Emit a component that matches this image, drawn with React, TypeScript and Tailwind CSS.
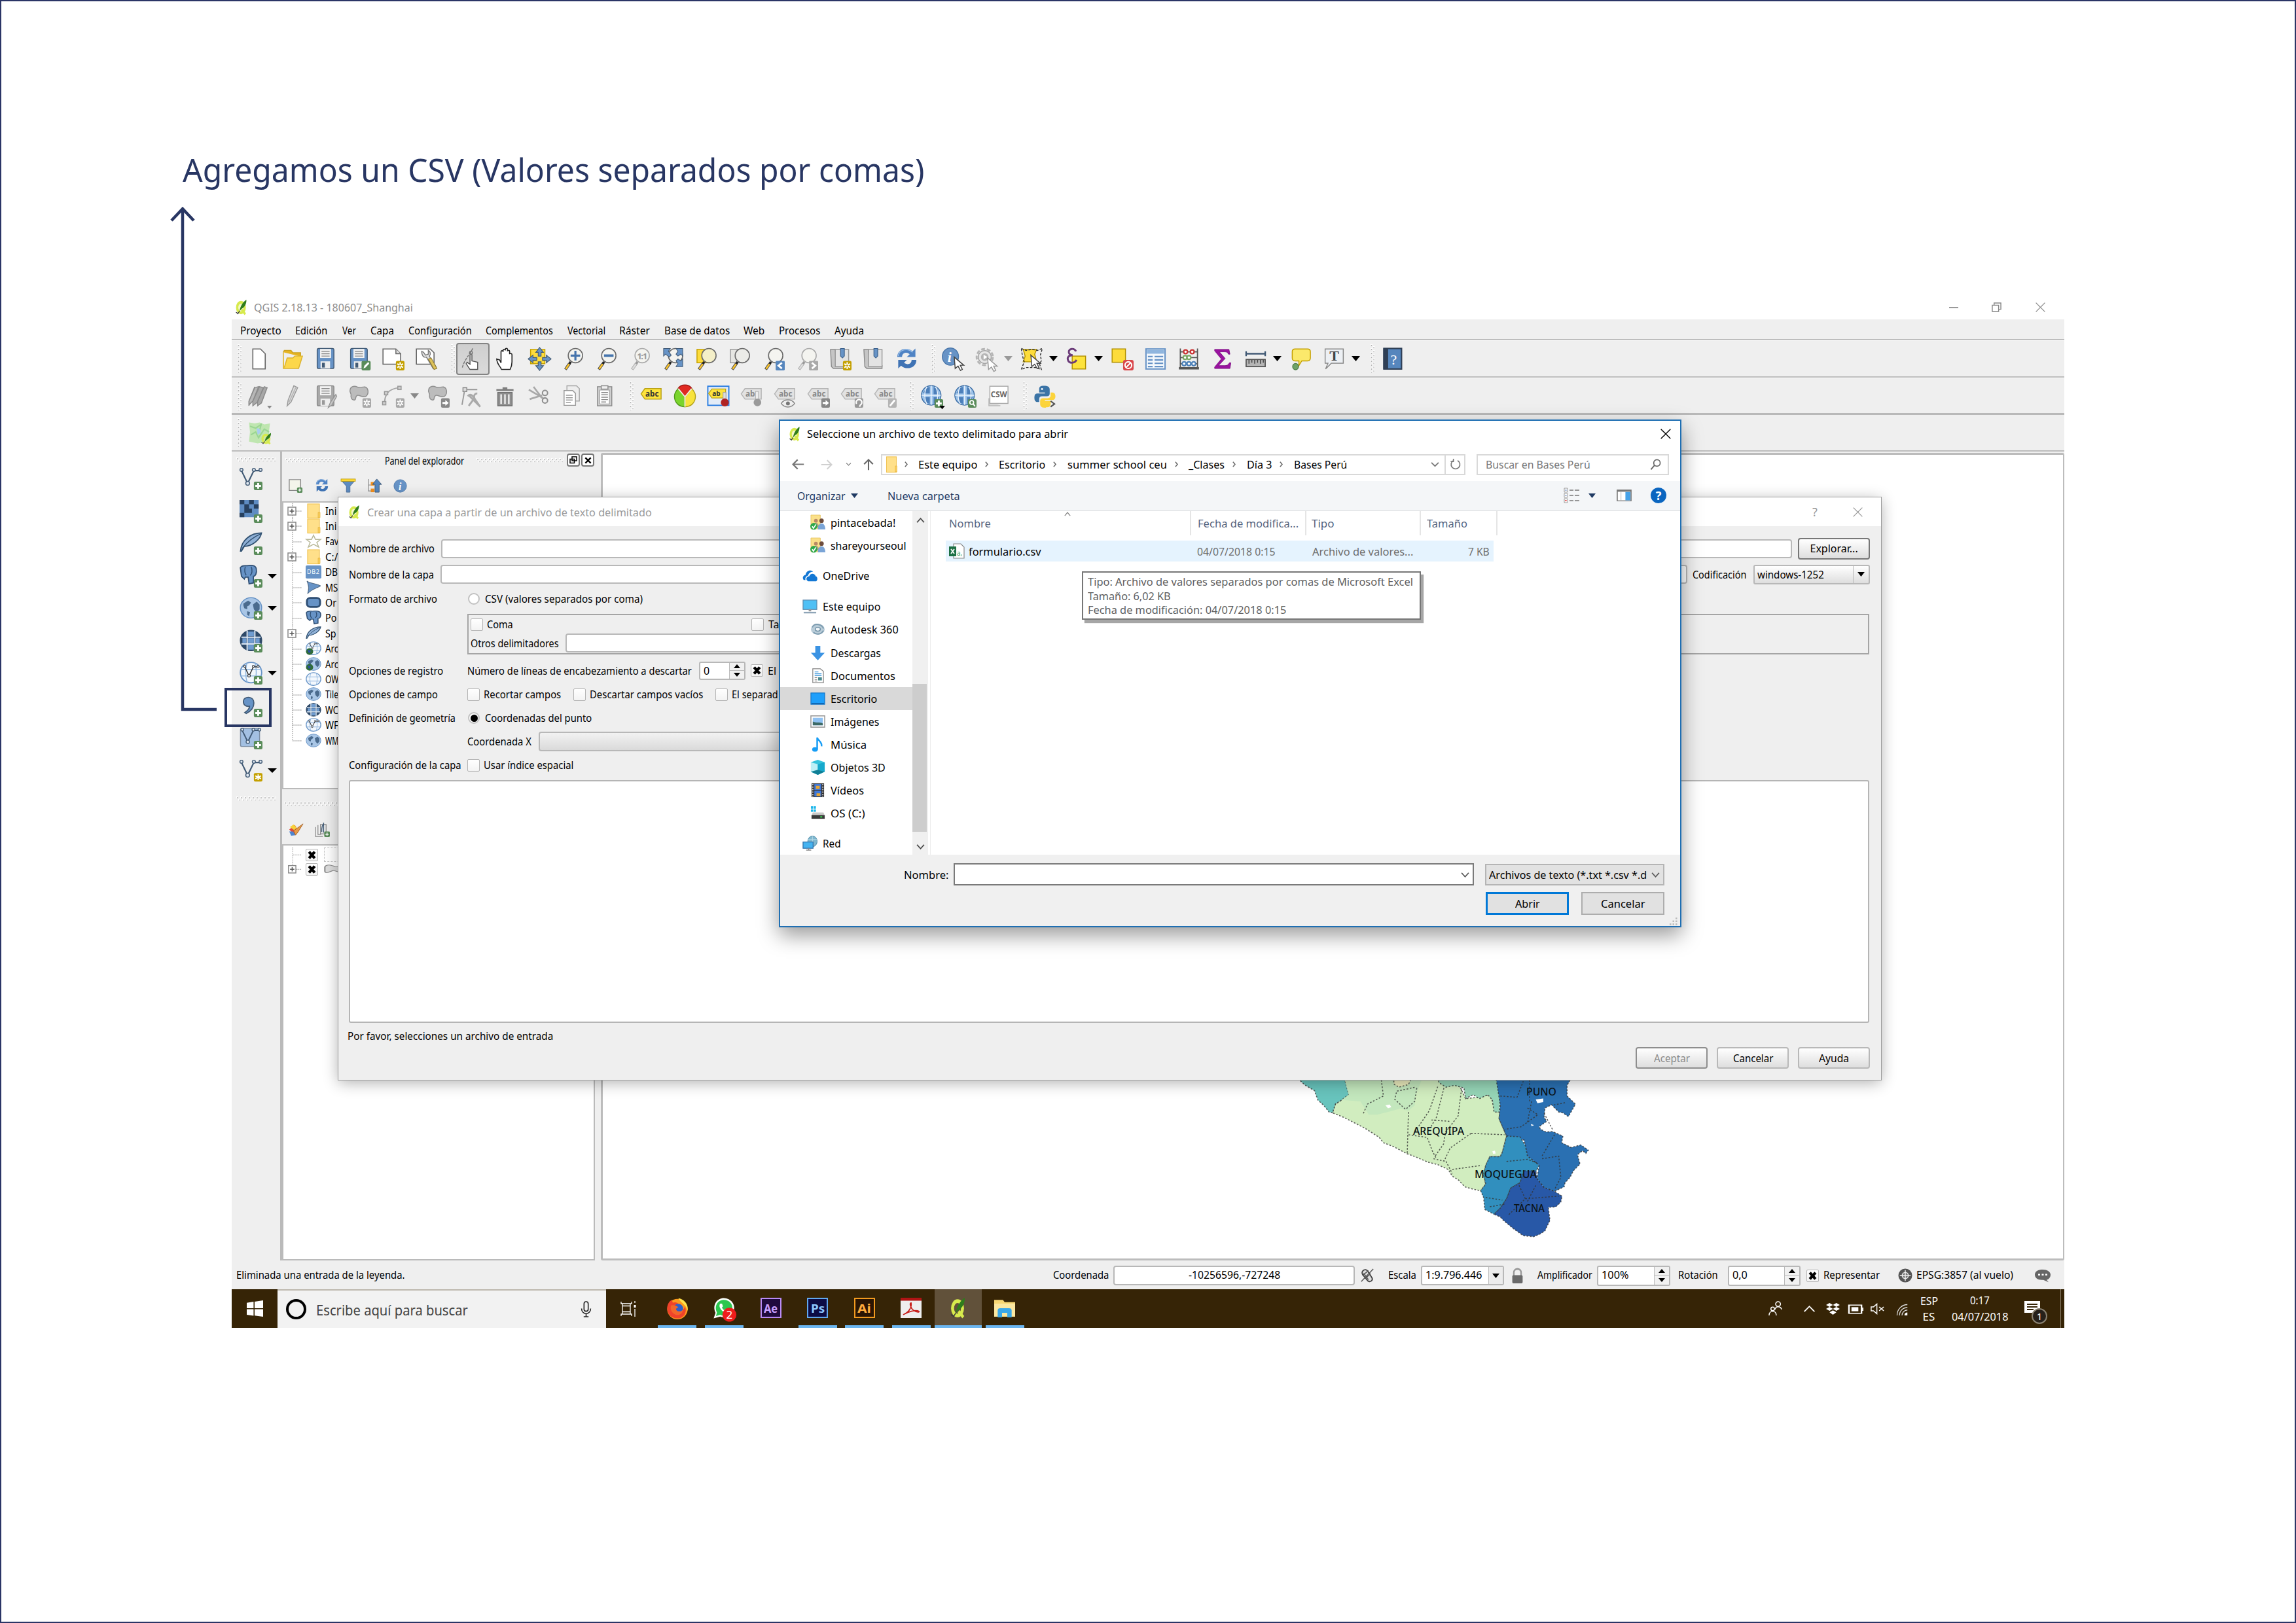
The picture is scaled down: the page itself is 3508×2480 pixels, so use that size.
import React, { useLayoutEffect, useRef, useState, ReactNode } from "react";

/* Text squeezed or stretched horizontally so that it fills the width of its box. */
function T({ className = "", children }: { className?: string; children: ReactNode }) {
  const outer = useRef<HTMLSpanElement>(null);
  const inner = useRef<HTMLSpanElement>(null);
  const [k, setK] = useState(1);
  useLayoutEffect(() => {
    if (outer.current && inner.current) {
      const natural = inner.current.offsetWidth;
      if (natural) setK(outer.current.clientWidth / natural);
    }
  }, []);
  return (
    <span ref={outer} className={"block shrink-0 whitespace-nowrap leading-none " + className}>
      <span ref={inner} className="inline-block origin-left" style={{ transform: `scaleX(${k})` }}>
        {children}
      </span>
    </span>
  );
}

function I({ children, className = "size-[35px]", vb = "0 0 24 24" }: { children: ReactNode; className?: string; vb?: string }) {
  return (
    <svg viewBox={vb} className={"block shrink-0 overflow-visible " + className} fill="none" preserveAspectRatio="none">
      {children}
    </svg>
  );
}

const B = "#6793c6";
const D = "#415a75";
const G = "#8c8c8c";

/* ---------- badges ---------- */
const Plus = () => (
  <g>
    <rect x="15" y="15" width="9" height="9" rx="1.500" fill="#5a8c5a" />
    <path d="M19.500 16.500v6M16.500 19.500h6" stroke="#fff" strokeWidth="2" />
  </g>
);
const Star = ({ c = "#c4a000" }: { c?: string }) => (
  <g>
    <rect x="15" y="14" width="9" height="10" rx="1.500" fill={c} />
    <path d="M19.500 15.500v7M16.500 17l6 4M22.500 17l-6 4" stroke="#fff" strokeWidth="1.500" />
    <circle cx="19.500" cy="19" r="1" fill={c} />
  </g>
);
const ArrowBadge = ({ c = "#888" }: { c?: string }) => (
  <g>
    <rect x="15" y="14" width="9" height="10" rx="1.500" fill={c} />
    <path d="M16.500 18h3v-2l3.500 3-3.500 3v-2h-3z" fill="#fff" />
  </g>
);
const ChevBadge = ({ c, d }: { c: string; d: string }) => (
  <g>
    <rect x="14.500" y="14" width="9.500" height="10" rx="1" fill={c} />
    <path d={d} stroke="#fff" strokeWidth="2" />
  </g>
);

/* ---------- toolbar icons ---------- */
const Lens = ({ gray = false, fill = "#f4f4f0", children }: { gray?: boolean; fill?: string; children?: ReactNode }) => (
  <g>
    <circle cx="14.500" cy="8.500" r="7.500" fill={fill} stroke={gray ? "#aaa" : "#6a6a6a"} strokeWidth="1.100" />
    <path d="M9.500 15L8 17.500" stroke={gray ? "#999" : "#222"} strokeWidth="2.600" />
    <path d="M8.200 17L4 23" stroke={gray ? "#aaa" : "#444"} strokeWidth="3" />
    <path d="M8 17.300L4.400 22.500" stroke={gray ? "#ddd" : "#fbc52e"} strokeWidth="1.800" />
    {children}
  </g>
);
const Page = ({ d = "M5 1.500h8l5 5v16H5z" }: { d?: string }) => <path d={d} fill="#fff" stroke="#666" strokeWidth="1.100" />;
const Floppy = ({ gray = false }: { gray?: boolean }) => (
  <g>
    <rect x="2.500" y="1" width="17.500" height="21" rx="1.500" fill={gray ? "#a9a9a9" : B} stroke={gray ? G : D} />
    <rect x="5.500" y="1.500" width="11.500" height="9.500" fill="#f2f2f2" />
    <path d="M7 4h8.500M7 6.500h8.500M7 9h8.500" stroke={G} strokeWidth="1" />
    <rect x="6" y="14.500" width="10" height="7.500" fill="#eee" />
    <rect x="7.500" y="16" width="3" height="5" fill={gray ? "#999" : D} />
  </g>
);
const Cursor = ({ x = 12, y = 10, c = "#444" }: { x?: number; y?: number; c?: string }) => (
  <path transform={`translate(${x} ${y})`} d="M0 0l1 12 3-2.500 2.500 4.500 2-1-2.200-4.400H10z" fill="#fff" stroke={c} strokeWidth="1" />
);
const Blob = () => (
  <path d="M2 5c1-4 5-4 8-2.500S18 0 20 4s0 9-4 8.500-6-3-7.500-.5 0 4-2.500 4-3.500-3-3-5-2-3-1-6z" fill="#bcbcbc" stroke="#8f8f8f" />
);
const Tag = ({ gray = false, t = "abc" }: { gray?: boolean; t?: string }) => (
  <g>
    <path d="M1 9.500L5 4h17v11H5z" fill={gray ? "#e2e2e2" : "#fde33c"} stroke={gray ? "#b4b4b4" : "#b8a014"} />
    <text x="5.500" y="12.500" fontSize="8.500" fontWeight="bold" fontFamily="Noto Sans, sans-serif" fill={gray ? "#888" : "#333"} textLength={t === "abc" ? 14 : 10} lengthAdjust="spacingAndGlyphs">
      {t}
    </text>
  </g>
);
const Globe = () => (
  <g>
    <circle cx="11.500" cy="11" r="10.200" fill="#9cc3ea" stroke="#3d6ea5" />
    <path d="M7 3l3-1v7H4l-1-1zM14 2l4 3 1 5h-5zM4 13h6v7l-3-1zM14 13h6l-2 5-4 2z" fill="#4c7fba" />
    <path d="M1.500 11h20M11.500 1v20M7 2c-3 5-3 13 0 18M16 2c3 5 3 13 0 18" stroke="#e9f2fb" strokeWidth="1" />
  </g>
);
const Refresh = () => (
  <g>
    <path d="M2 10c0-9 11-11 16-6l3-3v9h-9l3-3c-4-3-8-1-8 3z" fill="#4f83c4" />
    <path d="M22 13c0 9-11 11-16 6l-3 3v-9h9l-3 3c4 3 8 1 8-3z" fill="#3f73b4" />
    <path d="M3 9c1-7 10-9 15-4" stroke="#9cc0e8" strokeWidth="1" />
  </g>
);
const Roll = () => (
  <g>
    <path d="M2 2h5l1 17h13v3H5l-2-2z" fill="#c5c5c5" stroke="#8c8c8c" />
    <path d="M7 2h14v18H7z" fill="#e3e3e3" stroke="#9a9a9a" />
    <path d="M12.500 1h4v8l-2 2-2-2z" fill={B} stroke="#3a5f8a" strokeWidth=".8" />
  </g>
);

/* QGIS mark: lime ring with a tail and a green leaf laid over it. */
const Logo = ({ hole = "#f4f7c8" }: { hole?: string }) => (
  <g>
    <ellipse cx="11.500" cy="12.500" rx="7.300" ry="8.500" fill={hole} stroke="#d7ea4d" strokeWidth="4.400" />
    <path d="M13 16l7 7" stroke="#d7ea4d" strokeWidth="4" />
    <path d="M9 18C10 11 15 4 22 0c.5 6-3 12-8.500 14z" fill="#2f7d1c" />
    <path d="M9 18L5 23M2 20l4 2" stroke="#3a3a3a" strokeWidth="1.400" />
  </g>
);

const tb1a: ReactNode[] = [
  <Page />,
  <g><path d="M2 5l1-2h7l2 2.500h8v4" fill="#e6b422" stroke="#caa11f" /><path d="M2 5v17h16l4-13-8 0-2 2H6L3 21" fill="#fcd74a" stroke="#dbb22e" /></g>,
  <Floppy />,
  <g><Floppy /><rect x="14" y="14" width="9.500" height="10" rx="1.500" fill="#5a8c5a" /><path d="M16 22l1-3 4-4 1 2-4 4z" fill="#fff" /></g>,
  <g><Page d="M1.500 1.500H15l5 5v11H1.500z" /><path d="M15 1.500v5h5" fill="#ddd" stroke="#666" /><Star /></g>,
  <g><Page d="M1.500 1.500H16l4 4v12H1.500z" /><path d="M7 4c0 4 2 7 5 6l7 12 3-2-7-11c2-2 1-5-1-6l0 4-3 1-2-3z" fill="#e4e4e4" stroke="#777" /><path d="M14 12l6 11 3-1-6-11z" fill="#ddc25a" stroke="#8f7a2f" strokeWidth=".7" /></g>,
];
const touch = (
  <g>
    <path d="M9 23l-4-6 1-1.500 3 2V8c0-1.500 2-1.500 2 0v6l6 1.500V23z" fill="#fff" stroke="#555" />
    <path d="M1 21C3 13 8 8 12 1" stroke="#777" strokeDasharray="3 1" />
    <circle cx="10" cy="5.500" r="1.500" stroke="#777" />
  </g>
);
const tb1b: ReactNode[] = [
  <path d="M6 21C3 17 2 14 2 12l3 1 1.500 3V4.500c0-1.500 2-1.500 2.200 0V3c0-1.500 2.300-1.500 2.300 0V2c0-1.500 2.300-1.500 2.300 0v2c0-1.500 2.200-1.500 2.200 0v3c0-1.500 2.500-1 2.500.5V15c0 4-1 6-2 8H7z" fill="#fff" stroke="#222" strokeWidth="1.100" />,
  <g><rect x="2.500" y="2" width="15" height="15" fill="#fddc3b" stroke="#c4a000" /><path d="M12 0l4 5h-2.500v4h-3V5H8zM12 24l4-5h-2.500v-4h-3v4H8zM0 12l5-4v2.500h4v3H5V16zM24 12l-5-4v2.500h-4v3h4V16z" fill={B} stroke={D} strokeWidth=".8" /></g>,
  <Lens><path d="M14.500 3.500v10M9.500 8.500h10" stroke="#4675ad" strokeWidth="2.200" /></Lens>,
  <Lens><path d="M9.500 8.500h10" stroke="#4675ad" strokeWidth="2.600" /></Lens>,
  <Lens gray><text x="9" y="12" fontSize="9" fontWeight="bold" fill="#999" fontFamily="Noto Sans, sans-serif" textLength="11">1:1</text></Lens>,
  <g><Lens fill="#f4f4f0" /><path d="M2 1h7L7 4l3 4-2 2-4-3-2 2zM22 1h-7l2 3-2 3 2 2 3-2 2 2zM22 20h-7l2-3-2-3 2-2 3 2 2-2z" fill={B} stroke={D} strokeWidth=".7" /></g>,
  <g><rect x="2" y="2" width="12" height="14" fill="#fddc3b" stroke="#c4a000" /><Lens fill="#f4efc8" /></g>,
  <g><rect x="2" y="2" width="12" height="14" fill="#e6e6e2" stroke="#999" /><Lens fill="#ecece8" /></g>,
  <g><Lens /><ChevBadge c="#5686bd" d="M21 16l-3.500 3 3.500 3" /></g>,
  <g><Lens gray /><ChevBadge c="#a9a9a9" d="M17.500 16l3.500 3-3.500 3" /></g>,
  <g><Roll /><Star /></g>,
  <Roll />,
  <Refresh />,
];
const identify = <g><ellipse cx="9" cy="9.500" rx="8.500" ry="9" fill={B} stroke="#4c78ab" /><text x="6" y="15" fontSize="15" fontStyle="italic" fontWeight="bold" fontFamily="Liberation Serif, serif" fill="#fff">i</text><Cursor x={13} y={10} /></g>;
const actions = <g><circle cx="10" cy="10" r="8.500" stroke="#b5b5b5" strokeWidth="2" strokeDasharray="4 2" /><circle cx="10" cy="10" r="6.800" fill="#e6e6e6" stroke="#a5a5a5" /><circle cx="10" cy="10" r="4" fill="#b5b5b5" /><path d="M8.800 7.500l4 2.500-4 2.500z" fill="#fff" /><Cursor x={13} y={11} c="#999" /></g>;
const select = <g><path d="M3 2h14l-2 5 2 8H3l2-6z" fill="#fddc3b" stroke="#b39200" /><path d="M1 1l5 2 6-1 6 1 5-2-2 7 1 6-2 3 2 6-6-2H6l-5 2 3-8-2-7z" stroke="#333" strokeDasharray="2.500 1.500" /><Cursor x={11} y={8} /></g>;
const expr = <g><rect x="7" y="9" width="14" height="13.500" fill="#fde33c" stroke="#b39200" /><path d="M11 4C9 0 3 1 3.500 5c.3 2 2 3 4 3-4 0-6 2-5 5 1 4 7 4 9 0" stroke="#6a3a78" strokeWidth="2" /></g>;
const desel = <g><rect x="1.500" y="1.500" width="14" height="14" fill="#fddc3b" stroke="#b39200" /><rect x="13" y="13" width="11" height="11" rx="2" fill="#d9464b" /><circle cx="18.500" cy="18.500" r="3.500" stroke="#fff" strokeWidth="1.400" /><path d="M16 21l5-5" stroke="#fff" strokeWidth="1.400" /></g>;
const table = <g><rect x="2" y="1.500" width="20" height="21" fill="#f4f8fc" stroke={B} strokeWidth="1.400" /><rect x="3" y="2.500" width="18" height="4" fill="#8fb5de" /><path d="M4 9.500h5M11 9.500h9M4 13h5M11 13h9M4 16.500h5M11 16.500h9M4 20h5M11 20h9" stroke={B} strokeWidth="1.600" /></g>;
const abacus = <g><path d="M3 1v20M21 1v20M3 4.500h18M3 10.500h18M3 17h18" stroke="#555" strokeWidth="1.200" /><rect x="1.500" y="20.500" width="21" height="2.500" fill="#555" /><g fill="#fff" strokeWidth="1.500"><g stroke="#c93434"><circle cx="8.500" cy="4.500" r="2" /><circle cx="15.500" cy="4.500" r="2" /></g><g stroke="#79a965"><circle cx="8" cy="10.500" r="2" /><circle cx="12" cy="10.500" r="2" /></g><g stroke="#4c80b8"><circle cx="7" cy="17" r="2" /><circle cx="12" cy="17" r="2" /><circle cx="17" cy="17" r="2" /></g></g></g>;
const sigma = <path d="M4 2h15l1 5h-1.500c-1-2-2-2.500-4-2.500H9l6 7L8 19h7c2 0 3.500-1 4.500-3H21l-1 6H4v-1.500L11 12 4 3.500z" fill="#9a12a0" stroke="#7a0e80" strokeWidth=".6" />;
const measure = <g><path d="M2 6.500h20M2 4v5M22 4v5" stroke={D} strokeWidth="1.600" /><rect x="2" y="12.500" width="20" height="7.500" fill="#b5b5b5" stroke="#555" strokeWidth="1.200" /><path d="M5 13v4M8 13v3M11 13v4M14 13v3M17 13v4M20 13v3" stroke="#444" /></g>;
const tip = <g><path d="M6 1.500h13c2 0 3 1 3 3V11c0 2-1 3-3 3h-6l-3 5V14H6c-2 0-3-1-3-3V4.500c0-2 1-3 3-3z" fill="#fbe96b" stroke="#c4a000" /><ellipse cx="6.500" cy="20" rx="3" ry="3.300" fill="#6ea266" stroke="#4d7d47" /></g>;
const textAnn = <g><path d="M2.500 1.500h19v15H9l-6 6 2.500-6h-3z" fill="#edf0f4" stroke="#888" /><text x="7" y="14" fontSize="15" fontWeight="bold" fontFamily="Liberation Serif, serif" fill="#444">T</text></g>;
const help = <g><rect x="3" y="1" width="18.500" height="21.500" fill="#5686bd" stroke="#2f3f55" strokeWidth="1.500" /><rect x="2.500" y="1" width="5" height="21.500" fill="#2f3f55" /><text x="10" y="17.500" fontSize="15" fontFamily="Liberation Serif, serif" fill="#fff">?</text></g>;

const tb2a: ReactNode[] = [
  <g><path d="M7 2L1 17v5M12 2L5 17v5l5-4 6-15zM17 2l-7 15v5l4-3 6-16z" fill="#a8a8a8" stroke="#8a8a8a" /><path d="M7 3l4-1-6 15-4 4 0-4z" fill="#b8b8b8" stroke="#8a8a8a" /><path d="M20 22h5l-2.500 3z" fill="#888" /></g>,
  <g><path d="M13 1l4 2-7 15-4 4 1-6z" fill="#dcdcdc" stroke="#9a9a9a" /><path d="M15 3L8 18" stroke="#b4b4b4" /></g>,
  <g><Floppy gray /><path d="M22 10l-6 9-2 5 4-3 5-9z" fill="#c4c4c4" stroke="#909090" strokeWidth=".8" /></g>,
  <g><Blob /><Star c="#a8a8a8" /></g>,
  <g><path d="M3 21C3 11 6 4 19 3" stroke="#a5a5a5" strokeWidth="1.300" /><g fill="#ccc" stroke="#999"><rect x="1" y="17.500" width="3.500" height="3.500" /><rect x="3" y="7" width="3.500" height="3.500" /><rect x="17" y="1.500" width="3.500" height="3.500" /></g><Star c="#a8a8a8" /></g>,
];
const tb2b: ReactNode[] = [
  <g><Blob /><ArrowBadge c="#888" /></g>,
  <g><rect x="3" y="3" width="4" height="4" fill="#ddd" stroke="#888" /><path d="M7 5h11M4.500 7L2 21" stroke="#999" strokeWidth="1.300" /><path d="M9 11l11 11M18 9c-3 0-4 3-3 5L9 22M8 12c2-3 5-1 6 1l7 10" stroke="#aaa" strokeWidth="2" /></g>,
  <g><path d="M3 5.500h18M9.500 3.500h5" stroke="#808080" strokeWidth="2" /><path d="M4.500 8h15v14h-15z" fill="#8f8f8f" stroke="#707070" /><path d="M8 10v10M12 10v10M16 10v10" stroke="#e6e6e6" strokeWidth="1.800" /></g>,
  <g><path d="M2 5l15 9M3 15l13-4M7 2l9 12" stroke="#a8a8a8" strokeWidth="1.800" /><circle cx="19" cy="8.500" r="2.700" stroke="#8f8f8f" strokeWidth="1.400" /><circle cx="19" cy="16.500" r="2.700" stroke="#8f8f8f" strokeWidth="1.400" /></g>,
  <g><path d="M7 1h10l3 3v13H7z" fill="#eee" stroke="#a8a8a8" /><path d="M4 6h9l3 3v12.500H4z" fill="#fff" stroke="#999" /><path d="M6 11h7M6 13.500h7M6 16h7M6 18.500h5" stroke="#999" /></g>,
  <g><rect x="4" y="2" width="15" height="20" fill="#d0d0d0" stroke="#8c8c8c" /><path d="M6.500 5.500h10V20h-10z" fill="#fff" stroke="#999" strokeWidth=".7" /><rect x="8" y="1" width="7" height="3.500" fill="#f0f0f0" stroke="#8c8c8c" /><path d="M8 8h7M8 10.500h7M8 13h7M8 15.500h7M8 18h5" stroke="#888" /></g>,
];
const tb2c: ReactNode[] = [
  <Tag />,
  <g strokeWidth="1"><path d="M12 12.500V23C6 23 1 19 1 12 1 8 3 6 5 4z" fill="#7ad42c" stroke="#4f9a1a" /><path d="M12 12.500V23c6 0 11-4 11-11 0-4-2-6-4-8z" fill="#f8e33c" stroke="#b3a21a" /><path d="M12 12.500L5 3.500c3-4.500 11-4.500 14 0z" fill="#e02a22" stroke="#a01a15" /><path d="M5 4l7 8.500V23M12 12.500L19 4" stroke="#f4f4e8" strokeWidth="1.200" /></g>,
  <g><rect x="1" y="1.500" width="22" height="20" fill="#e3ecf7" stroke="#2a7de1" strokeWidth="1.300" /><g transform="translate(1 1) scale(.85)"><Tag t="ab" /></g><rect x="17" y="8" width="3" height="8" fill="#ddd" stroke="#999" strokeWidth=".6" /><circle cx="18.800" cy="18.500" r="4.200" fill="#b02323" /></g>,
  <g><Tag gray t="ab" /><rect x="16" y="7" width="3" height="8" fill="#eee" stroke="#aaa" strokeWidth=".6" /><circle cx="18" cy="18.500" r="4" fill="#9a9a9a" /></g>,
  <g><Tag gray /><path d="M8 19.500c3-5 11-5 14 0-3 5-11 5-14 0z" fill="#eee" stroke="#888" /><circle cx="15" cy="19.500" r="2" fill="#777" /></g>,
  <g><Tag gray /><ArrowBadge /></g>,
  <g><Tag gray /><rect x="15" y="14" width="9" height="10" rx="1.500" fill="#999" /><path d="M17 20a3 3 0 1 1 4 1l-1 2" stroke="#fff" strokeWidth="1.500" /></g>,
  <g><Tag gray /><rect x="15" y="14" width="9" height="10" rx="1.500" fill="#b5b5b5" /><path d="M17 22l5-6" stroke="#fff" strokeWidth="2" /></g>,
];
const tb2d: ReactNode[] = [
  <g><Globe /><Plus /><path d="M20 22h6l-3 3.500z" fill="#000" /></g>,
  <g><Globe /><rect x="15" y="15" width="9" height="9" rx="1.500" fill="#5a8c5a" /><circle cx="19" cy="18.500" r="2" stroke="#fff" strokeWidth="1.200" /><path d="M20.500 20l2 2.500" stroke="#fff" strokeWidth="1.400" /></g>,
  <g><path d="M2 14v8h12" stroke="#bbb" fill="#ddd" /><rect x="3" y="1.500" width="19" height="18" fill="#fff" stroke="#aaa" /><text x="4" y="13" fontSize="8.500" fontWeight="bold" fontFamily="Noto Sans, sans-serif" fill="#666" textLength="17" lengthAdjust="spacingAndGlyphs">CSW</text></g>,
];
const python = (
  <g>
    <path d="M11 1c-4 0-5 1-5 4v3h6v1H4c-3 0-3 3-3 5s1 4 3 4h2v-3c0-2 1-3 3-3h5c2 0 3-1 3-3V5c0-3-2-4-6-4z" fill="#3b74a6" />
    <path d="M13 23.500c4 0 5-1 5-4v-2.500h-6v-1h8c2 0 3-2 3-4s-1-4-3-4h-2v3c0 2-1 3-3 3h-5c-2 0-3 1-3 3v3c0 3 2 4 6 4z" fill="#fcd43c" />
    <circle cx="9" cy="4.500" r="1" fill="#fff" />
    <path d="M18 17l4 3-4 3" stroke="#555" strokeWidth="1.500" />
  </g>
);

/* ---------- layer-source icons ---------- */
const Nodes = ({ c = D }: { c?: string }) => (
  <g>
    <path d="M2 3.500L8.500 17 15 3.500h7" stroke={c} strokeWidth="1.500" />
    <g fill="#dfe7f0" stroke={c}><circle cx="2" cy="2.700" r="1.600" /><circle cx="8.500" cy="16.800" r="2" /><circle cx="15" cy="2.700" r="1.600" /><circle cx="22" cy="2.700" r="1.600" /></g>
  </g>
);
const Elephant = () => (
  <g>
    <path d="M.8 3c2-3 5-2 7-2 4-1 9-.5 9.700 3 1 5-1 8-3 8v7l-4.500 1-1-7H6l-1 2-3-3z" fill={B} stroke="#2f4f74" strokeWidth="1.200" />
    <path d="M6 2c-1 4-.5 7 1 9M12 2c2 3 1 8-1 9" stroke="#2f4f74" strokeWidth="1" />
  </g>
);
const Feather = () => (
  <g>
    <path d="M1 20C2 8 12 1 23 1c-1 6-9 14-18 14l-3 5z" fill="#8fb0d6" stroke="#2f4f6f" strokeWidth="1.200" />
    <path d="M3 17C9 9 15 5 22 2" stroke="#2f4f6f" strokeWidth="1" />
  </g>
);
const Earth = () => (
  <g><ellipse cx="12" cy="11.500" rx="11.200" ry="10.700" fill="#a9c6e6" stroke={B} /><path d="M4 7l5-3 3 2-2 3-2 1v3l-3-1-1-3zM14 8l4-3 3 3v5l-3 4-3-4zM8 15l3 1-1 4-2-1z" fill="#4a6b8e" /></g>
);
const Earth2 = () => (
  <g><ellipse cx="12" cy="11.500" rx="11.200" ry="10.700" fill="#2f4a68" stroke="#2f4a68" /><path d="M2 8h20M2 15h20M8 1v21M16 1v21" stroke="#dce8f5" strokeWidth="1.400" /><path d="M9 9h6v5H9zM3 9h4v5H3zM17 9h4v5h-4zM9 2h6v5H9zM9 16h6v5H9z" fill="#6f9cd0" /></g>
);
const Earth3 = () => (
  <g><ellipse cx="12" cy="11.500" rx="11.200" ry="10.700" fill="#f3f8fd" stroke={B} strokeWidth="1.300" /><path d="M1 8h22M1 15h22M8 1c-2 6-2 15 0 21M16 1c2 6 2 15 0 21" stroke="#8fb5de" /></g>
);
const side: { icon: ReactNode; drop?: boolean }[] = [
  { icon: <g><Nodes /><Plus /></g> },
  { icon: <g><rect x="0" y="0" width="20" height="18" fill="#5e8cc2" /><path d="M0 0h5v4.500H0zM10 0h5v4.500h-5zM5 4.500h5V9H5zM15 4.500h5V9h-5zM5 9h8v4.500H5zM0 13.500h5V18H0z" fill="#27405e" /><Plus /></g> },
  { icon: <g><Feather /><Plus /></g> },
  { icon: <g><Elephant /><Plus /></g>, drop: true },
  { icon: <g><Earth /><Plus /></g>, drop: true },
  { icon: <g><Earth2 /><Plus /></g> },
  { icon: <g><Earth3 /><g transform="translate(4 3) scale(.7)"><Nodes c="#333" /></g><Plus /></g>, drop: true },
  { icon: <g><path d="M4 7c0-5 11-6 11 2 0 6-4 9-8 11l-1.500-1c3-2 5-4 5-6.500C6 13 4 11 4 7z" fill={B} stroke={D} strokeWidth="1.200" /><Plus /></g> },
  { icon: <g><rect x="1" y="2" width="20" height="19" rx="1.500" fill="#a3c0e2" stroke="#7d8fa5" /><g transform="translate(1 1) scale(.9)"><Nodes /></g><Plus /></g> },
  { icon: <g><Nodes /><rect x="15" y="14.500" width="9" height="9" rx="1.500" fill="#c4a000" /><path d="M19.500 16v6M16.500 17.500l6 3M22.500 17.500l-6 3" stroke="#fff" strokeWidth="1.300" /></g>, drop: true },
];

const folder = <g><rect x="3" y="0" width="18" height="23.500" fill="#ffe08a" stroke="#f0c454" strokeWidth="1.200" /><path d="M19 14h3v9h-3z" fill="#fbd05f" stroke="#e5b440" strokeWidth=".8" /></g>;
const tree: { t: string; w: string; x?: boolean; icon: ReactNode }[] = [
  { t: "Ini", w: "w-[17px]", x: true, icon: folder },
  { t: "Ini", w: "w-[17px]", x: true, icon: folder },
  { t: "Fav", w: "w-[20px]", icon: <path d="M12 2l3 7h8l-6 5 3 8-8-5-8 5 3-8-6-5h8z" fill="#fff" stroke="#b9b99a" strokeWidth="1.500" /> },
  { t: "C:/", w: "w-[19px]", x: true, icon: folder },
  { t: "DB", w: "w-[19px]", icon: <g><rect x="0" y="1" width="24" height="22" rx="2" fill={B} /><text x="2" y="15" fontSize="9" fill="#fff" fontFamily="Noto Sans, sans-serif" textLength="19">DB2</text></g> },
  { t: "MS", w: "w-[19px]", icon: <path d="M2 1c5 4 14 4 21 8-4 3-13 5-20 13 2-8 2-13-1-21z" fill={B} stroke={D} /> },
  { t: "Or", w: "w-[17px]", icon: <rect x="2" y="4" width="20" height="15" rx="5" fill={B} stroke="#2f4f74" strokeWidth="3" /> },
  { t: "Po", w: "w-[17px]", icon: <g transform="scale(1.300 1.100)"><Elephant /></g> },
  { t: "Sp", w: "w-[17px]", x: true, icon: <Feather /> },
  { t: "Arc", w: "w-[20px]", icon: <g><Earth3 /><g transform="translate(5 2) scale(.6)"><Nodes c="#333" /></g><circle cx="6" cy="17" r="5.500" fill="#2f6b3c" /><path d="M3 14l5 2-3 4z" fill="#2a4fae" /></g> },
  { t: "Arc", w: "w-[20px]", icon: <g><Earth /><circle cx="6" cy="17" r="5.500" fill="#2f6b3c" /><path d="M3 14l5 2-3 4z" fill="#2a4fae" /></g> },
  { t: "OW", w: "w-[20px]", icon: <Earth3 /> },
  { t: "Tile", w: "w-[20px]", icon: <Earth /> },
  { t: "WC", w: "w-[20px]", icon: <Earth2 /> },
  { t: "WF", w: "w-[20px]", icon: <g><Earth3 /><g transform="translate(4 3) scale(.7)"><Nodes c="#333" /></g></g> },
  { t: "WM", w: "w-[20px]", icon: <Earth /> },
];

/* ---------- small building blocks ---------- */
const Cell = ({ children }: { children: ReactNode }) => (
  <div className="flex w-[51px] shrink-0 items-center justify-center"><I>{children}</I></div>
);
const Drop = ({ c = "#000" }: { c?: string }) => (
  <div className="flex w-[18px] shrink-0 items-center justify-start pl-[1px]"><I className="h-[8px] w-[13px]"><path d="M0 0h24L12 24z" fill={c} /></I></div>
);
const Grip = ({ className = "" }: { className?: string }) => (
  <svg className={"block h-[44px] w-[7px] shrink-0 " + className} viewBox="0 0 7 44" fill="none">
    <path d="M1.500 0v44" stroke="#fff" strokeWidth="3" strokeDasharray="3 3" />
    <path d="M1.500 1v43" stroke="#b5b5b5" strokeWidth="1.500" strokeDasharray="2 4" />
    <path d="M5 3v41" stroke="#fff" strokeWidth="3" strokeDasharray="3 3" />
    <path d="M5 4v40" stroke="#c5c5c5" strokeWidth="1.500" strokeDasharray="2 4" />
  </svg>
);
const HGrip = ({ className }: { className: string }) => (
  <svg className={"block h-[7px] shrink-0 " + className} fill="none">
    <path d="M0 1.500h500" stroke="#fff" strokeWidth="3" strokeDasharray="3 3" />
    <path d="M1 2h500" stroke="#b5b5b5" strokeWidth="1.500" strokeDasharray="2 4" />
    <path d="M3 5h500" stroke="#fff" strokeWidth="3" strokeDasharray="3 3" />
    <path d="M4 5.500h500" stroke="#c5c5c5" strokeWidth="1.500" strokeDasharray="2 4" />
  </svg>
);
const MidGrip = () => <div className="flex w-[20px] shrink-0 items-center justify-end pr-[1px]"><Grip /></div>;

const Check = ({ on = false, className = "" }: { on?: boolean; className?: string }) => (
  <div className={"flex size-[19px] shrink-0 items-center justify-center rounded-[2px] border border-[#b4b4b4] bg-gradient-to-b from-white to-[#f3f3f3] " + className}>
    {on && <I className="size-[13px]"><path d="M4 3l16 18M20 3L4 21" stroke="#000" strokeWidth="8" /></I>}
  </div>
);
const Radio = ({ on = false }: { on?: boolean }) => (
  <div className="ml-[1px] flex size-[18px] shrink-0 items-center justify-center rounded-full border-2 border-[#c2c2c2] bg-white">
    {on && <div className="size-[11px] rounded-full bg-black" />}
  </div>
);
const X = ({ className, c = "#000" }: { className: string; c?: string }) => (
  <I className={className}><path d="M1 1l22 22M23 1L1 23" stroke={c} strokeWidth="2" /></I>
);
const Chev = ({ className = "", c = "#666", d = "M4 4l7 8-7 8" }: { className?: string; c?: string; d?: string }) => (
  <I className={"size-[11px] " + className}><path d={d} stroke={c} strokeWidth="3.200" /></I>
);
const Spin = ({ className, children }: { className: string; children: ReactNode }) => (
  <div className={"flex shrink-0 items-stretch overflow-hidden rounded-[3px] border-2 border-[#b8b8b8] bg-white " + className}>
    <div className="flex flex-1 items-center pl-[5px]">{children}</div>
    <div className="flex w-[23px] flex-col border-l border-[#bbb] bg-[#f1f1f1]">
      <div className="flex flex-1 items-center justify-center border-b border-[#bbb]"><I className="h-[6px] w-[10px]"><path d="M0 24h24L12 0z" fill="#000" /></I></div>
      <div className="flex flex-1 items-center justify-center"><I className="h-[6px] w-[10px]"><path d="M0 0h24L12 24z" fill="#000" /></I></div>
    </div>
  </div>
);
const Btn = ({ className, children }: { className: string; children: ReactNode }) => (
  <div className={"flex shrink-0 items-center justify-center rounded-[4px] border-2 bg-gradient-to-b from-white to-[#dedede] " + className}>{children}</div>
);

/* ---------- main window ---------- */
function MenuBar() {
  return (
    <div className="flex h-[32px] items-center border-b-2 border-[#bdbdbd] pl-[13px] pt-[3px] text-[16px] text-black">
      <T className="w-[63px]">Proyecto</T>
      <T className="ml-[21px] w-[49px]">Edición</T>
      <T className="ml-[23px] w-[21px]">Ver</T>
      <T className="ml-[22px] w-[36px]">Capa</T>
      <T className="ml-[22px] w-[97px]">Configuración</T>
      <T className="ml-[21px] w-[103px]">Complementos</T>
      <T className="ml-[22px] w-[58px]">Vectorial</T>
      <T className="ml-[21px] w-[47px]">Ráster</T>
      <T className="ml-[22px] w-[100px]">Base de datos</T>
      <T className="ml-[21px] w-[32px]">Web</T>
      <T className="ml-[22px] w-[63px]">Procesos</T>
      <T className="ml-[22px] w-[45px]">Ayuda</T>
    </div>
  );
}

function Toolbars() {
  return (
    <>
      <div className="flex h-[57px] items-center border-b-2 border-[#bdbdbd] border-t border-t-white">
        <Grip className="ml-[9px]" />
        <div className="w-[1px]" />
        {tb1a.map((n, i) => <Cell key={i}>{n}</Cell>)}
        <MidGrip />
        <div className="flex h-[49px] w-[51px] items-center justify-center rounded-[4px] border-2 border-[#848484] bg-gradient-to-b from-[#cfcfcf] to-[#dadada]"><I>{touch}</I></div>
        {tb1b.map((n, i) => <Cell key={i}>{n}</Cell>)}
        <MidGrip />
        <Cell>{identify}</Cell><Cell>{actions}</Cell><Drop c="#999" />
        <Cell>{select}</Cell><Drop /><Cell>{expr}</Cell><Drop />
        <Cell>{desel}</Cell><Cell>{table}</Cell><Cell>{abacus}</Cell><Cell>{sigma}</Cell><Cell>{measure}</Cell><Drop />
        <Cell>{tip}</Cell><Cell>{textAnn}</Cell><Drop />
        <MidGrip />
        <Cell>{help}</Cell>
      </div>
      <div className="flex h-[57px] items-center border-b-[3px] border-[#b9b9b9] border-t border-t-white pt-[1px]">
        <Grip className="ml-[9px]" />
        <div className="w-[1px]" />
        {tb2a.map((n, i) => <Cell key={i}>{n}</Cell>)}
        <Drop c="#888" />
        {tb2b.map((n, i) => <Cell key={i}>{n}</Cell>)}
        <MidGrip />
        {tb2c.map((n, i) => <Cell key={i}>{n}</Cell>)}
        <MidGrip />
        {tb2d.map((n, i) => <Cell key={i}>{n}</Cell>)}
        <MidGrip />
        <Cell>{python}</Cell>
      </div>
      <div className="flex h-[56px] items-center border-b-2 border-[#bdbdbd]">
        <Grip className="ml-[9px]" />
        <div className="w-[1px]" />
        <Cell>
          <g>
            <path d="M1 1l6 1 5-1 5 2 6-1-1 8 1 13-7-1-6 1-9-2 1-10z" fill="#bfe6b0" />
            <path d="M2 5l6 2 6-4M3 14l5-3 3 6 6-9 5 3M14 2l-2 8" stroke="#9bd693" strokeWidth="1.500" />
            <path d="M9 7c3 0 5 2 4 5l-3 2z" fill="#a9cdf0" />
            <g transform="translate(13 12) scale(.5)"><Logo hole="#cfe6a0" /></g>
          </g>
        </Cell>
      </div>
    </>
  );
}

const TreeLines = ({ box, last = false }: { box?: boolean; last?: boolean }) => (
  <svg className="block h-full w-[28px] shrink-0" viewBox="0 0 28 23.400" fill="none">
    <path d={last ? "M8 0v12M8 12h14" : "M8 0v23.400M8 12h14"} stroke="#9a9a9a" strokeWidth="1.300" strokeDasharray="1.500 1.500" />
    {box && <g><rect x="1" y="6" width="12" height="12" fill="#fff" stroke="#888" strokeWidth="1.500" /><path d="M3.500 12h7M7 8.500v7" stroke="#555" strokeWidth="1.500" /></g>}
  </svg>
);

function Panels() {
  return (
    <div className="flex h-[1236px]">
      <div className="flex w-[77px] flex-col border-r-[3px] border-[#bababa]">
        <div className="flex h-[24px] items-center pl-[7px]"><HGrip className="w-[61px]" /></div>
        {side.map((s, i) => (
          <div key={i} className="flex h-[49.500px] items-start pl-[12px]">
            <I>{s.icon}</I>
            {s.drop && <div className="flex h-[35px] items-center pl-[8px]"><I className="h-[7px] w-[14px]"><path d="M0 0h24L12 24z" fill="#000" /></I></div>}
          </div>
        ))}
        <div className="flex h-[22px] items-center pl-[7px]"><HGrip className="w-[61px]" /></div>
      </div>

      <div className="flex w-[478px] flex-col">
        <div className="flex h-[26px] items-center">
          <HGrip className="ml-[5px] w-[131px]" />
          <T className="ml-[21px] w-[121px] pt-[2px] text-[16px] text-black">Panel del explorador</T>
          <HGrip className="ml-[19px] w-[133px]" />
          <div className="ml-[5px] flex size-[20px] items-center justify-center rounded-[4px] border-2 border-[#777] bg-white">
            <I className="size-[12px]"><path d="M8 2h14v12H8zM2 9h13v12H2z" fill="#fff" stroke="#000" strokeWidth="3" /></I>
          </div>
          <div className="ml-[2px] flex size-[20px] items-center justify-center rounded-[4px] border-2 border-[#777] bg-white">
            <I className="size-[11px]"><path d="M3 3l18 18M21 3L3 21" stroke="#000" strokeWidth="5" /></I>
          </div>
        </div>
        <div className="flex h-[50px] items-center gap-[18px] pl-[10px] pt-[2px]">
          <I className="size-[22px]"><path d="M1 2h19v18H1z" fill="#f4f4ea" stroke="#888" strokeWidth="1.500" /><rect x="14" y="15" width="9" height="9" rx="2" fill="#5a8c5a" /><path d="M18.500 17v5M16 19.500h5" stroke="#fff" strokeWidth="1.500" /></I>
          <I className="size-[22px]"><Refresh /></I>
          <I className="size-[22px]"><path d="M1 4h22l-8 9v10H9V13z" fill="#5e8cc2" stroke="#49709e" /><rect x="0" y="1" width="24" height="4" fill="#fdd835" stroke="#b39200" strokeWidth=".8" /></I>
          <I className="size-[22px]"><path d="M2 1v20h5M2 11h5" stroke="#999" strokeWidth="1.500" /><rect x="6" y="6" width="6" height="6" fill="#f28f1c" /><rect x="6" y="17" width="6" height="6" fill="#f28f1c" /><path d="M16 1l8 9h-4v13h-7V10H9z" fill="#5686bd" stroke={D} /></I>
          <I className="size-[21px]"><circle cx="12" cy="12" r="11" fill={B} stroke="#4c78ab" /><text x="9" y="19" fontSize="18" fontStyle="italic" fontWeight="bold" fontFamily="Liberation Serif, serif" fill="#fff">i</text></I>
        </div>
        <div className="h-[440px] overflow-hidden border-2 border-[#bababa] bg-white pt-[1px]">
          {tree.map((r, i) => (
            <div key={i} className="flex h-[23.400px] items-center pl-[6px]">
              <TreeLines box={r.x} last={i === tree.length - 1} />
              <I className="h-[22px] w-[24px]">{r.icon}</I>
              <T className={"ml-[6px] text-[16px] text-black " + r.w}>{r.t}</T>
            </div>
          ))}
        </div>
        <div className="flex h-[44px] items-center"><HGrip className="ml-[3px] w-[440px]" /></div>
        <div className="flex h-[40px] items-start gap-[17px] pl-[10px] pt-[6px]">
          <I className="size-[23px]"><path d="M1 12l9-7 5 8-6 8z" fill="#e04a3a" /><path d="M2 8l6-4 5 5-4 4z" fill="#f6d13a" /><path d="M1 15l6 0 4 6-7 1z" fill="#4d85cf" /><path d="M8 14L23 3l-8 13-4 5z" fill="#e69a45" stroke="#a8642a" /></I>
          <I className="size-[23px]"><path d="M1 8v15h12M5 5v15h5" stroke="#888" strokeWidth="1.300" /><path d="M9 4h9v15H9z" fill="#eee" stroke="#888" strokeWidth="1.300" /><path d="M11 16c0-6 1-12 3-12M14 1v16" stroke={D} strokeWidth="1.500" /><rect x="15" y="15" width="9" height="9" rx="1.500" fill="#5a8c5a" /><path d="M19.500 17v5M17 19.500h5" stroke="#fff" strokeWidth="1.500" /></I>
        </div>
        <div className="flex-1 overflow-hidden border-2 border-[#bababa] bg-white pt-[3px]">
          <div className="flex h-[22px] items-center pl-[6px]"><TreeLines /><Check on /><div className="ml-[9px] h-[22px] w-[60px] border border-dashed border-[#c5c5c5]" /></div>
          <div className="flex h-[22px] items-center pl-[6px]"><TreeLines box last /><Check on /><I className="ml-[9px] h-[14px] w-[32px]"><path d="M1 6C3-1 8 1 12 5s10-4 11 3 0 14-5 12-6-6-9-3-8 8-8 0z" fill="#ddd" stroke="#888" strokeWidth="1.500" /></I></div>
        </div>
      </div>

      <div className="ml-[9px] mt-[2px] flex-1 rounded-[3px] border-[3px] border-[#bcbcbc] border-r-2 bg-white">
        <PeruMap />
      </div>
    </div>
  );
}

/* South of Peru: departments with dotted province limits. */
function PeruMap() {
  return (
    <svg className="block h-full w-full" viewBox="921 695 2231 1228" preserveAspectRatio="none" fill="none">
      <g transform="matrix(.6378 0 0 .408 1900 1281)" strokeDasharray="2.500 2.500">
        <g stroke="#333" strokeWidth="1.600" strokeOpacity=".75">
          <path d="M250 890L510 890 520 935 532 975 560 970 592 960 600 1010 613 1030 612 1050 630 1115 620 1175 615 1192 590 1192 580 1225 575 1260 580 1295 568 1320 545 1312 530 1305 515 1280 500 1265 490 1240 465 1222 440 1212 415 1195 390 1180 360 1155 335 1140 325 1120 310 1105 290 1085 265 1065 240 1045 213 1028 220 995 235 980 252 960z" fill="#d1edbf" vectorEffect="non-scaling-stroke" />
          <path d="M130 900L148 925 170 945 178 980 192 1000 205 1025 213 1028 220 995 235 980 252 960 240 890z" fill="#68c4bd" vectorEffect="non-scaling-stroke" />
          <path d="M240 890L430 890 412 965 410 1000 395 1020 375 1012 345 1025 320 1035 300 1035 290 1010 280 985 235 980 252 960z" fill="#c3e7bd" stroke="none" />
          <path d="M360 890L405 890 395 922 372 932 360 920z" fill="#edeebf" vectorEffect="non-scaling-stroke" />
          <path d="M465 890L615 890 615 970 613 1025 600 1025 596 980 585 960 565 975 550 960 532 975 528 935 505 925 485 932 468 915z" fill="#96d5b7" vectorEffect="non-scaling-stroke" />
          <path d="M604 890L788 890 775 925 775 965 795 995 790 1010 778 1042 765 1028 755 1025 738 998 722 1010 720 1045 726 1060 708 1080 712 1090 725 1100 740 1098 765 1115 762 1140 785 1158 808 1148 826 1168 820 1180 812 1170 800 1185 806 1220 790 1245 782 1270 770 1290 768 1305 745 1322 720 1308 703 1275 708 1225 680 1190 672 1130 630 1115 612 1050 615 1000z" fill="#2a70b2" vectorEffect="non-scaling-stroke" />
          <path d="M630 1115L662 1118 675 1150 680 1190 708 1225 700 1250 672 1250 662 1290 640 1310 630 1350 615 1385 600 1408 578 1390 575 1345 568 1320 580 1295 575 1260 580 1225 590 1192 615 1192 620 1175z" fill="#318fbe" vectorEffect="non-scaling-stroke" />
          <path d="M672 1245L700 1245 703 1275 720 1308 745 1322 763 1340 760 1362 748 1380 730 1382 734 1430 722 1470 710 1482 695 1492 670 1488 645 1460 622 1430 615 1418 600 1408 615 1385 630 1350 640 1310 662 1290z" fill="#2858a7" vectorEffect="non-scaling-stroke" />
          <path d="M700 978l18-4 0 14-14 4zM688 1070l8 4-6 4zM340 1000l10-3 4 10-8 4zM596 1172l6-2 2 10-6 2z" fill="#fff" stroke="none" />
        </g>
        <g stroke="#333" strokeOpacity=".8" strokeWidth="1.500">
          <path d="M330 905l5 60-38 30-10 35M415 935l-5 50-22 30-26-38 5-30 45-15M395 1025l-3 160M465 930l-20 90-35 80M480 935l-18 110-15 40M522 940l-8 100-30 60-5 45-20 45M395 1110l45 10 12 50 10 30M545 1105l-50 55-15 50M450 1055l45 5M545 1105l80 5M455 1200l30 10M500 1240l70-15M485 1210l15 45M630 1210l50-8 25 15M685 905v80M615 965l40 5 15-60M680 1010l25 25-40 45-40 10M745 1110l-30 80M720 1030l20 60M715 1200l40-10 5 80-15 45M660 1300l15 50-40 60M675 1350l80-10M700 1300l-20 60M580 1345l40 10M690 985l-10 80M770 990l-30 10M590 1380l35-10" vectorEffect="non-scaling-stroke" />
        </g>
      </g>
      <g fontFamily="Noto Sans, sans-serif" fontSize="15.500" fill="#0c1418" fontWeight="500">
        <text x="2332" y="1674" textLength="46" lengthAdjust="spacingAndGlyphs">PUNO</text>
        <text x="2159" y="1734" textLength="78" lengthAdjust="spacingAndGlyphs">AREQUIPA</text>
        <text x="2253" y="1800" textLength="95" lengthAdjust="spacingAndGlyphs">MOQUEGUA</text>
        <text x="2313" y="1852" textLength="47" lengthAdjust="spacingAndGlyphs">TACNA</text>
      </g>
    </svg>
  );
}

function StatusBar() {
  return (
    <div className="flex h-[44px] items-center pl-[7px] pt-[2px] text-[15.500px] text-black">
      <T className="w-[258px]">Eliminada una entrada de la leyenda.</T>
      <T className="ml-[990px] w-[85px]">Coordenada</T>
      <div className="ml-[7px] flex h-[30px] w-[369px] items-center justify-center rounded-[4px] border-2 border-[#b8b8b8] bg-white"><T className="w-[140px]">-10256596,-727248</T></div>
      <I className="ml-[8px] size-[22px]"><path d="M4 5c3-4 7-3 9 0l7 11c2 4-3 8-7 5L4 10C3 8 3 7 4 5z" fill="#ddd" stroke="#444" strokeWidth="2" /><path d="M4 12l10-8M8 17l10-8M6 8l8 11M2 22L22 1" stroke="#555" strokeWidth="1.600" /></I>
      <T className="ml-[21px] w-[43px]">Escala</T>
      <div className="ml-[7px] flex h-[30px] w-[127px] items-stretch rounded-[3px] border-2 border-[#b8b8b8] bg-white">
        <div className="flex flex-1 items-center pl-[5px]"><T className="w-[86px]">1:9.796.446</T></div>
        <div className="flex w-[22px] items-center justify-center border-l border-[#bbb] bg-[#ececec]"><I className="h-[7px] w-[11px]"><path d="M0 0h24L12 24z" fill="#000" /></I></div>
      </div>
      <I className="ml-[11px] h-[23px] w-[19px]"><path d="M5 12V7c0-8 14-8 14 0v5" stroke="#999" strokeWidth="3" /><rect x="2" y="11" width="20" height="13" rx="2" fill="#6a6a6a" /></I>
      <T className="ml-[21px] w-[84px]">Amplificador</T>
      <Spin className="ml-[7px] h-[31px] w-[112px]"><T className="w-[41px]">100%</T></Spin>
      <T className="ml-[12px] w-[61px]">Rotación</T>
      <Spin className="ml-[15px] h-[31px] w-[111px]"><T className="w-[23px]">0,0</T></Spin>
      <Check on className="ml-[9px]" />
      <T className="ml-[7px] w-[86px]">Representar</T>
      <I className="ml-[28px] size-[22px]"><circle cx="12" cy="12" r="9" fill="#777" stroke="#555" strokeWidth="5" /><path d="M3 12h18M12 3v18" stroke="#eee" strokeWidth="1.600" /><circle cx="12" cy="12" r="5" stroke="#eee" strokeWidth="1.500" /></I>
      <T className="ml-[6px] w-[148px]">EPSG:3857 (al vuelo)</T>
      <I className="ml-[33px] h-[21px] w-[24px]"><path d="M12 1c7 0 12 4 12 9s-3 8-6 9l3 4-8-4C5 20 0 16 0 10s5-9 12-9z" fill="#666" /><path d="M5 10h3M10.500 10h3M16 10h3" stroke="#fff" strokeWidth="3" /></I>
    </div>
  );
}

const Adobe = ({ t, c, bg }: { t: string; c: string; bg: string }) => (
  <div className={"flex h-[31px] w-[32px] items-center justify-center border-2 text-[18px] font-bold leading-none " + c + " " + bg}><T className="w-[21px]">{t}</T></div>
);
function TaskCell({ children, line = true, active = false }: { children: ReactNode; line?: boolean; active?: boolean }) {
  return (
    <div className={"flex h-full w-[71.500px] shrink-0 flex-col items-center " + (active ? "bg-[#61513a]" : "")}>
      <div className="flex h-[55px] items-center pt-[2px]">{children}</div>
      {line && <div className={active ? "h-[4px] w-full bg-[#6cb6f0]" : "h-[4px] w-[59px] bg-[#6cb6f0]"} />}
    </div>
  );
}

function Taskbar() {
  return (
    <div className="flex h-[59px] bg-[#362406] text-white">
      <div className="flex w-[70px] items-center justify-center">
        <I className="size-[25px]"><path d="M0 3.500l10-1.500v9.500H0zM11.500 1.800L24 0v11.500H11.500zM0 13h10v9.500L0 21zM11.500 13H24v11l-12.500-1.800z" fill="#fff" /></I>
      </div>
      <div className="flex w-[502px] items-center border-t-2 border-[#bdb8ae] bg-[#f2f2f2] pl-[13px]">
        <div className="size-[31px] rounded-full border-[4px] border-black" />
        <T className="ml-[15px] w-[232px] text-[22px] text-[#444]">Escribe aquí para buscar</T>
        <I className="ml-[172px] h-[25px] w-[17px]" vb="0 0 16 24"><rect x="5" y="1" width="6" height="14" rx="3" stroke="#222" strokeWidth="1.500" /><path d="M1.500 11c0 10 13 10 13 0M8 18.500V23M4.500 23h7" stroke="#222" strokeWidth="1.500" /></I>
      </div>
      <div className="flex w-[73px] items-center justify-center pr-[5px]">
        <I className="size-[24px]"><path d="M1 1v3h16V1M3 7.500h12M3 16.500h12M3 4v16M15 4v16M1 23v-3h16v3M22 0v3M22 12v12" stroke="#fff" strokeWidth="1.300" /><rect x="20.500" y="6" width="3" height="4" fill="#fff" /></I>
      </div>
      <TaskCell>
        <I className="size-[34px]"><circle cx="12" cy="13" r="11" fill="#ff9a1c" /><path d="M1 12C1 7 4 4 6 3l1 3c3-1 5 0 6 1-4 1-4 4-2 6 4 4 9 0 9-3 3 6-1 13-8 13S1 18 1 12z" fill="#f0432a" /><path d="M13 1c8 2 11 8 10 14-1-5-4-7-6-9s-3-3-4-5z" fill="#ffe24a" /><circle cx="13" cy="12.500" r="5.200" fill="#2f5fc8" /><path d="M5 9c3-1 6 0 8 2-3 1-3 3-1 4 3 1 5 0 6-2 0 5-4 7-8 6-4-2-6-5-5-10z" fill="#f2672a" /></I>
      </TaskCell>
      <TaskCell>
        <I className="size-[34px]"><path d="M1 23l2-6C-1 8 5 1 12 1s12 6 11 12-7 11-15 8z" fill="#fff" /><path d="M3.500 20.500l1-4C1 9 6 3 12 3s10 5 9 10-7 9-13 6z" fill="#2cc64f" /><path d="M8 7c-3 4 4 11 8 10l1-3-3-1-2 1c-1-1-2-2-2-3l1-1-1-3z" fill="#fff" /><circle cx="18" cy="19" r="7.500" fill="#ee1c1c" /><text x="14.500" y="23.500" fontSize="12" fill="#fff" fontFamily="Noto Sans, sans-serif">2</text></I>
      </TaskCell>
      <TaskCell line={false}><Adobe t="Ae" c="border-[#b98af5] text-[#c9a0ff]" bg="bg-[#1f0a3d]" /></TaskCell>
      <TaskCell><Adobe t="Ps" c="border-[#62a8ee] text-[#8cc8ff]" bg="bg-[#0c0c45]" /></TaskCell>
      <TaskCell><Adobe t="Ai" c="border-[#f29a1f] text-[#ffab3d]" bg="bg-[#2a1503]" /></TaskCell>
      <TaskCell>
        <I className="h-[31px] w-[32px]"><rect width="24" height="24" fill="#eee" /><rect width="24" height="3.500" fill="#b01414" /><path d="M3 20c7-3 10-9 9-14-2 0-1 6 3 9s7 2 6 1c-3-2-12 0-18 4z" stroke="#c8201c" strokeWidth="1.300" /></I>
      </TaskCell>
      <TaskCell active><I className="h-[31px] w-[25px]"><Logo hole="#61513a" /></I></TaskCell>
      <TaskCell>
        <I className="h-[28px] w-[32px]"><path d="M0 1h10l2 3h12v19H0z" fill="#f7d774" /><path d="M0 6h24v17H0z" fill="#fbe7a0" /><path d="M4 24v-9c0-2 1-3 3-3h10c2 0 3 1 3 3v9h-5v-6H9v6z" fill="#3aa8ea" /></I>
      </TaskCell>

      <I className="ml-[1131px] mt-[18px] size-[22px]"><circle cx="16" cy="5" r="4" stroke="#fff" strokeWidth="1.700" /><circle cx="7" cy="13" r="3" stroke="#fff" strokeWidth="1.700" /><path d="M11 14c1-6 9-6 11 0M1 24c0-9 12-9 12 0" stroke="#fff" strokeWidth="1.700" /></I>
      <I className="ml-[32px] mt-[25px] h-[10px] w-[17px]"><path d="M1 22L12 3l11 19" stroke="#fff" strokeWidth="3" /></I>
      <I className="ml-[17px] mt-[21px] h-[18px] w-[21px]"><path d="M6 0l6 4-6 4-6-4zM18 0l6 4-6 4-6-4zM6 8l6 4-6 4-6-4zM18 8l6 4-6 4-6-4zM12 15l6 4-6 5-6-5z" fill="#fff" /></I>
      <I className="ml-[13px] mt-[23px] h-[15px] w-[23px]"><rect x="1" y="2" width="20" height="20" stroke="#fff" strokeWidth="2.500" /><rect x="5" y="7" width="11" height="10" fill="#fff" /><path d="M23 8v8" stroke="#fff" strokeWidth="2" /></I>
      <I className="ml-[11px] mt-[21px] h-[18px] w-[21px]"><path d="M1 8h4l6-6v20l-6-6H1z" stroke="#fff" strokeWidth="1.700" /><path d="M15 8l8 8M23 8l-8 8" stroke="#fff" strokeWidth="1.700" /></I>
      <I className="ml-[18px] mt-[22px] size-[18px]"><path d="M2 24C2 12 11 2 23 2M7 24C7 14 14 8 23 8M12 24c0-6 5-11 11-11" stroke="#ddd" strokeWidth="1.700" /><path d="M17 24c0-4 2-6 6-6v6z" fill="#fff" /></I>
      <div className="ml-[18px] flex w-[28px] flex-col items-center pt-[9px] text-[17px]">
        <T className="w-[27px]">ESP</T>
        <T className="mt-[7px] w-[19px]">ES</T>
      </div>
      <div className="ml-[21px] flex w-[86px] flex-col items-center pt-[8px] text-[17px]">
        <T className="w-[30px]">0:17</T>
        <T className="mt-[8px] w-[86px]">04/07/2018</T>
      </div>
      <div className="relative ml-[25px] mt-[18px] size-[24px]">
        <I className="size-[24px]"><path d="M0 0h24v18h-8l-4 6v-6H0z" fill="#fff" /><path d="M4 5h16M4 9h16M4 13h10" stroke="#362406" strokeWidth="2" /></I>
        <div className="absolute left-[11px] top-[11px] flex size-[24px] items-center justify-center rounded-full border-2 border-[#8a8272] bg-[#26201a] text-[15px] leading-none">1</div>
      </div>
      <div className="ml-auto mr-[5px] w-px bg-[#8a7d66]" />
    </div>
  );
}

/* ---------- delimited text dialog ---------- */
function LayerDialog() {
  const lab = "flex w-[181px] shrink-0";
  return (
    <div className="absolute left-[163px] top-[306px] flex h-[890px] w-[2357px] flex-col bg-[#efefef] text-[16px] text-black shadow-[0_4px_22px_rgba(0,0,0,0.32)] outline outline-[1.500px] outline-[#9c9c9c]">
      <div className="flex h-[44px] shrink-0 items-center bg-white pl-[15px]">
        <I className="h-[21px] w-[18px]"><Logo /></I>
        <T className="ml-[11px] w-[435px] text-[17px] text-[#9a9a9a]">Crear una capa a partir de un archivo de texto delimitado</T>
        <span className="ml-[1773px] text-[18px] leading-none text-[#999]">?</span>
        <X className="ml-[54px] size-[15px]" c="#999" />
      </div>
      <div className="mt-[17px] flex h-[34px] shrink-0 items-center pl-[16px]">
        <T className="w-[131px]">Nombre de archivo</T>
        <div className="ml-[10px] h-[29px] w-[2064px] rounded-[4px] border-2 border-[#b8b8b8] bg-white" />
        <Btn className="ml-[9px] h-[33px] w-[110px] border-[#777]"><T className="w-[73px]">Explorar...</T></Btn>
      </div>
      <div className="mt-[8px] flex h-[29px] shrink-0 items-center pl-[16px]">
        <T className="w-[130px]">Nombre de la capa</T>
        <div className="ml-[10px] h-[29px] w-[1905px] rounded-[4px] border-2 border-[#b8b8b8] bg-white" />
        <T className="ml-[8px] w-[82px]">Codificación</T>
        <div className="ml-[11px] flex h-[30px] w-[178px] items-stretch rounded-[3px] border-2 border-[#b8b8b8] bg-gradient-to-b from-white to-[#dedede]">
          <div className="flex flex-1 items-center pl-[4px]"><T className="w-[102px]">windows-1252</T></div>
          <div className="flex w-[24px] items-center justify-center border-l border-[#bbb]"><I className="h-[7px] w-[11px]"><path d="M0 0h24L12 24z" fill="#000" /></I></div>
        </div>
      </div>
      <div className="mt-[13px] flex h-[20px] shrink-0 items-center pl-[16px]">
        <div className={lab}><T className="w-[135px]">Formato de archivo</T></div>
        <Radio />
        <T className="ml-[8px] w-[241px]">CSV (valores separados por coma)</T>
      </div>
      <div className="ml-[197px] mt-[13px] flex h-[62px] w-[2142px] shrink-0 flex-col border-2 border-[#a5a5a5] pl-[3px] pt-[4px]">
        <div className="flex h-[20px] items-center">
          <Check />
          <T className="ml-[6px] w-[40px]">Coma</T>
          <Check className="ml-[364px]" />
          <span className="ml-[7px] leading-none">Ta</span>
        </div>
        <div className="mt-[4px] flex h-[29px] items-center">
          <T className="w-[135px]">Otros delimitadores</T>
          <div className="ml-[10px] h-[29px] w-[1000px] rounded-[4px] border-2 border-[#b8b8b8] bg-white" />
        </div>
      </div>
      <div className="mt-[10px] flex h-[29px] shrink-0 items-center pl-[16px]">
        <div className={lab}><T className="w-[144px]">Opciones de registro</T></div>
        <T className="w-[343px]">Número de líneas de encabezamiento a descartar</T>
        <Spin className="ml-[11px] h-[28px] w-[71px]"><T className="w-[9px]">0</T></Spin>
        <Check on className="ml-[8px]" />
        <span className="ml-[7px] leading-none">El</span>
      </div>
      <div className="mt-[12px] flex h-[20px] shrink-0 items-center pl-[16px]">
        <div className={lab}><T className="w-[136px]">Opciones de campo</T></div>
        <Check />
        <T className="ml-[6px] w-[118px]">Recortar campos</T>
        <Check className="ml-[19px]" />
        <T className="ml-[6px] w-[173px]">Descartar campos vacíos</T>
        <Check className="ml-[19px]" />
        <T className="ml-[6px] w-[71px]">El separad</T>
      </div>
      <div className="mt-[16px] flex h-[20px] shrink-0 items-center pl-[16px]">
        <div className={lab}><T className="w-[163px]">Definición de geometría</T></div>
        <Radio on />
        <T className="ml-[8px] w-[163px]">Coordenadas del punto</T>
      </div>
      <div className="mt-[11px] flex h-[29px] shrink-0 items-center pl-[197px]">
        <T className="w-[98px]">Coordenada X</T>
        <div className="ml-[11px] h-[30px] w-[1000px] rounded-[4px] border-2 border-[#b8b8b8] bg-gradient-to-b from-[#f2f2f2] to-[#dadada]" />
      </div>
      <div className="mt-[12px] flex h-[20px] shrink-0 items-center pl-[16px]">
        <div className={lab}><T className="w-[172px]">Configuración de la capa</T></div>
        <Check />
        <T className="ml-[6px] w-[137px]">Usar índice espacial</T>
      </div>
      <div className="ml-[16px] mt-[13px] h-[371px] w-[2323px] shrink-0 rounded-[3px] border-2 border-[#b5b5b5] bg-white" />
      <div className="mt-[10px] flex h-[20px] shrink-0 items-center pl-[14px]"><T className="w-[314px]">Por favor, selecciones un archivo de entrada</T></div>
      <div className="mt-[7px] flex h-[33px] shrink-0 justify-end gap-[14px] pr-[17px]">
        <Btn className="w-[110px] border-[#8e8e8e] text-[#8a8a8a]"><T className="w-[55px]">Aceptar</T></Btn>
        <Btn className="w-[110px] border-[#b8b8b8]"><T className="w-[61px]">Cancelar</T></Btn>
        <Btn className="w-[110px] border-[#b8b8b8]"><T className="w-[46px]">Ayuda</T></Btn>
      </div>
    </div>
  );
}

/* ---------- file picker ---------- */
const people = <g><path d="M1 0h15v22H1z" fill="#fbe08a" stroke="#e3bd54" strokeWidth=".8" /><circle cx="9" cy="9" r="3" fill="#b98a64" /><path d="M4 20c0-10 10-10 10 0z" fill="#a9a27f" /><circle cx="18" cy="9" r="3.500" fill="#6d4c3d" /><path d="M12 23c0-13 12-13 12 0z" fill="#7aa4d6" /><circle cx="5.500" cy="18" r="5.500" fill="#2fa84a" /><path d="M3 18l2 3 4-6" stroke="#fff" strokeWidth="1.800" /></g>;
const places: { t: string; w: string; lvl: 0 | 1; icon: ReactNode; sel?: boolean; gap?: string }[] = [
  { t: "pintacebada!", w: "w-[99px]", lvl: 1, icon: people },
  { t: "shareyourseoul", w: "w-[116px]", lvl: 1, icon: people },
  { t: "OneDrive", w: "w-[71px]", lvl: 0, gap: "mt-[11px]", icon: <path d="M2 19c-3-4 0-8 3-8 1-7 8-9 12-5-4 0-7 2-8 6-4 1-5 5-4 7zM9 21c-5-3-2-8 2-8 1-5 9-5 10 0 3 0 4 6 1 8z" fill="#1277d4" /> },
  { t: "Este equipo", w: "w-[88px]", lvl: 0, gap: "mt-[12px]", icon: <g><rect x="1" y="2" width="22" height="15" fill="#4fc0f5" stroke="#5f87a8" strokeWidth="1.200" /><path d="M10 17h4v3h-4z" fill="#999" /><path d="M2 22h20" stroke="#8fa5b8" strokeWidth="2.500" /></g> },
  { t: "Autodesk 360", w: "w-[104px]", lvl: 1, icon: <g><ellipse cx="12" cy="12" rx="11" ry="8.500" fill="#b9ccd8" /><path d="M3 9c4-8 16-5 18 2M5 17c4 4 12 4 16-3" stroke="#7d9cb0" strokeWidth="2" /><ellipse cx="12" cy="12" rx="4" ry="3" fill="#f2f7fa" stroke="#6b8da3" strokeWidth="1.500" /></g> },
  { t: "Descargas", w: "w-[77px]", lvl: 1, icon: <path d="M8 1h8v11h7L12 24 1 12h7z" fill="#3b93e3" /> },
  { t: "Documentos", w: "w-[99px]", lvl: 1, icon: <g><path d="M4 1h12l5 4v18H4z" fill="#fff" stroke="#888" strokeWidth="1.300" /><path d="M7 6h6M7 9h11M7 12h11" stroke="#2f8fd8" strokeWidth="1.300" /><path d="M7 15h4M7 18h4M7 20.500h4" stroke="#888" strokeWidth="1.300" /><rect x="12.500" y="14.500" width="6" height="5" fill="#4c8a8f" /></g> },
  { t: "Escritorio", w: "w-[71px]", lvl: 1, sel: true, icon: <g><rect x="1" y="3" width="22" height="18" fill="#1e9ffb" stroke="#1273c4" strokeWidth="1.200" /><path d="M2 19.500h20" stroke="#0d5ca3" strokeWidth="1.500" /></g> },
  { t: "Imágenes", w: "w-[74px]", lvl: 1, icon: <g><rect x="1" y="3" width="22" height="18" fill="#fff" stroke="#999" strokeWidth="1.600" /><rect x="4" y="6" width="16" height="12" fill="#8fc1f2" /><path d="M4 12c6 3 10 0 16 3v3H4z" fill="#3d6a66" /></g> },
  { t: "Música", w: "w-[55px]", lvl: 1, icon: <g><ellipse cx="7.500" cy="20" rx="4.500" ry="3.500" fill="#179df5" /><path d="M11 20V1c1 5 8 6 7 14" stroke="#179df5" strokeWidth="2.600" /></g> },
  { t: "Objetos 3D", w: "w-[84px]", lvl: 1, icon: <g><path d="M12 0l11 4v15l-11 5-11-5V4z" fill="#35c3dc" /><path d="M1 4l11 3v11L1 19z" fill="#bdf0f6" /><path d="M12 7l11-3v15l-11-3z" fill="#16a9cd" /><path d="M1 19l11-3 11 3-11 5z" fill="#0f7f96" /></g> },
  { t: "Vídeos", w: "w-[51px]", lvl: 1, icon: <g><rect x="2" y="1" width="20" height="22" fill="#333" /><path d="M4 2v21M20 2v21" stroke="#ccc" strokeWidth="2" strokeDasharray="2 2" /><rect x="6.500" y="2" width="11" height="9.500" fill="#3f78d8" /><rect x="6.500" y="12.500" width="11" height="9.500" fill="#3f78d8" /><path d="M9 5h6v5H9zM10 17h6v4h-6z" fill="#e8a530" /></g> },
  { t: "OS (C:)", w: "w-[53px]", lvl: 1, icon: <g><path d="M1 1h3.500v4H1zM5.500 1H9v4H5.500zM1 6h3.500v4H1zM5.500 6H9v4H5.500z" fill="#1cb6ea" /><path d="M4 11h17l2 5H2z" fill="#c9c9c9" /><rect x="2" y="15" width="21" height="6" fill="#3a3a3a" /><rect x="16" y="17" width="3" height="2" fill="#35e04f" /></g> },
  { t: "Red", w: "w-[28px]", lvl: 0, gap: "mt-[11px]", icon: <g><ellipse cx="16" cy="9" rx="7.500" ry="8.500" fill="#7fb7cf" stroke="#4e8ba8" /><path d="M16 1v15M9 6h14" stroke="#b9dbe8" /><rect x="1" y="10" width="16" height="10" fill="#45b3f0" stroke="#2f6fa8" strokeWidth="1.300" /><path d="M6 23h8M10 20v3" stroke="#888" strokeWidth="1.500" /></g> },
];

function FileDialog() {
  return (
    <div className="absolute left-[836px] top-[187px] flex h-[776px] w-[1379px] flex-col border-2 border-[#1f6fb3] bg-white text-[17px] text-black shadow-[0_12px_30px_rgba(0,0,0,0.4)]">
      <div className="flex h-[39px] shrink-0 items-center pl-[13px]">
        <I className="h-[22px] w-[18px]"><Logo /></I>
        <T className="ml-[10px] w-[399px]">Seleccione un archivo de texto delimitado para abrir</T>
        <X className="ml-[905px] size-[16px]" />
      </div>
      <div className="mt-[11px] flex h-[33px] shrink-0 items-center pl-[18px]">
        <I className="size-[19px]"><path d="M23 12H2M11 3l-9 9 9 9" stroke="#777" strokeWidth="2.800" /></I>
        <I className="ml-[25px] size-[18px]"><path d="M1 12h21M13 3l9 9-9 9" stroke="#d0d0d0" strokeWidth="2.800" /></I>
        <Chev className="ml-[20px] !size-[9px]" d="M3 7l9 9 9-9" c="#777" />
        <I className="ml-[17px] size-[18px]"><path d="M12 23V2M3 11l9-9 9 9" stroke="#666" strokeWidth="2.800" /></I>
        <div className="ml-[10px] flex h-[32px] w-[893px] shrink-0 items-center border-2 border-[#d9d9d9] pl-[4px]">
          <I className="h-[24px] w-[20px]">{folder}</I>
          <Chev className="ml-[9px]" />
          <T className="ml-[11px] w-[90px]">Este equipo</T>
          <Chev className="ml-[11px]" />
          <T className="ml-[11px] w-[71px]">Escritorio</T>
          <Chev className="ml-[11px]" />
          <T className="ml-[12px] w-[152px]">summer school ceu</T>
          <Chev className="ml-[11px]" />
          <T className="ml-[11px] w-[55px]">_Clases</T>
          <Chev className="ml-[11px]" />
          <T className="ml-[12px] w-[38px]">Día 3</T>
          <Chev className="ml-[11px]" />
          <T className="ml-[12px] w-[81px]">Bases Perú</T>
          <Chev className="ml-auto mr-[8px] !size-[13px]" d="M2 7l10 10L22 7" c="#777" />
          <div className="flex h-full w-[30px] items-center justify-center border-l-2 border-[#d9d9d9]">
            <I className="size-[17px]"><path d="M17 4a9.500 9.500 0 1 1-9 0M8 0v6H2" stroke="#777" strokeWidth="2.300" /></I>
          </div>
        </div>
        <div className="ml-[17px] flex h-[32px] w-[294px] shrink-0 items-center border-2 border-[#d9d9d9] pl-[12px]">
          <T className="w-[160px] text-[#777]">Buscar en Bases Perú</T>
          <I className="ml-[91px] size-[17px]"><circle cx="15" cy="9" r="7" stroke="#666" strokeWidth="2.400" /><path d="M10 14l-8 9" stroke="#666" strokeWidth="2.800" /></I>
        </div>
      </div>
      <div className="mt-[9px] flex h-[46px] shrink-0 items-center border-b-2 border-[#e6e8ea] bg-[#f4f6f8] pl-[26px] text-[#1f3a63]">
        <T className="w-[74px]">Organizar</T>
        <I className="ml-[8px] h-[7px] w-[11px]"><path d="M0 0h24L12 24z" fill="#1f3a63" /></I>
        <T className="ml-[45px] w-[111px]">Nueva carpeta</T>
        <I className="ml-[922px] h-[24px] w-[24px]"><path d="M1 1h5v6H1zM1 9h5v6H1zM1 17h5v6H1z" fill="#fff" stroke="#999" /><path d="M2.500 19h2v2h-2z" fill="#d33" /><path d="M2.500 3h2v2h-2zM2.500 11h2v2h-2z" fill="#8aa6d0" /><path d="M9 4h6M17 4h7M9 12h6M17 12h7M9 20h6M17 20h7" stroke="#777" strokeWidth="1.500" /></I>
        <I className="ml-[14px] h-[7px] w-[11px]"><path d="M0 0h24L12 24z" fill="#1f3a63" /></I>
        <I className="ml-[32px] h-[18px] w-[23px]"><rect x="1" y="1" width="22" height="22" fill="#fff" stroke="#777" strokeWidth="1.700" /><rect x="1" y="1" width="22" height="3.500" fill="#777" /><rect x="14" y="5" width="8" height="17" fill="#46a2e8" /><path d="M7 5v17" stroke="#aaa" /></I>
        <div className="ml-[29px] flex size-[24px] items-center justify-center rounded-full bg-[#0b66c0] text-[18px] font-bold leading-none text-white">?</div>
      </div>
      <div className="flex h-[525px] shrink-0">
        <div className="w-[202px] shrink-0">
          {places.map((p) => (
            <div key={p.t} className={"flex h-[35.100px] items-center " + (p.sel ? "bg-[#d9d9d9] " : "") + (p.lvl ? "pl-[46px] " : "pl-[34px] ") + (p.gap ?? "")}>
              <I className="size-[23px]">{p.icon}</I>
              <T className={"ml-[8px] " + p.w}>{p.t}</T>
            </div>
          ))}
        </div>
        <div className="flex w-[24px] shrink-0 flex-col items-center bg-[#f0f0f0]">
          <Chev className="mt-[8px] !size-[13px]" d="M2 17L12 6l10 11" c="#444" />
          <div className="mt-[243px] h-[226px] w-[22px] self-start bg-[#cdcdcd]" />
          <Chev className="mt-[16px] !size-[13px]" d="M2 7l10 11L22 7" c="#444" />
        </div>
        <div className="ml-[3px] flex-1 border-l border-[#ededed] pl-[23px]">
          <div className="flex h-[37px] items-center text-[#56657f]">
            <div className="relative flex h-full w-[375px] items-center border-r-2 border-[#e5e5e5] pl-[5px]">
              <T className="w-[64px]">Nombre</T>
              <Chev className="absolute left-[181px] top-0 !size-[10px]" d="M2 17L12 5l10 12" c="#888" />
            </div>
            <div className="flex h-full w-[176px] items-center border-r-2 border-[#e5e5e5] pl-[10px]"><T className="w-[154px]">Fecha de modifica...</T></div>
            <div className="flex h-full w-[175px] items-center border-r-2 border-[#e5e5e5] pl-[8px]"><T className="w-[35px]">Tipo</T></div>
            <div className="flex h-full w-[117px] items-center border-r-2 border-[#e5e5e5] pl-[9px]"><T className="w-[62px]">Tamaño</T></div>
          </div>
          <div className="mt-[8px] flex h-[32px] w-[837px] items-center bg-[#e5f3fe] pl-[5px] text-[#6d6d6d]">
            <I className="size-[24px]"><path d="M7 1h11l5 5v17H7z" fill="#fff" stroke="#888" strokeWidth="1.200" /><rect x="0" y="5" width="11" height="15" fill="#1d7044" /><path d="M3 9l5 7M8 9l-5 7" stroke="#fff" strokeWidth="1.800" /><text x="12" y="19" fontSize="10" fill="#3f9a66" fontFamily="Noto Sans, sans-serif">a,</text></I>
            <T className="ml-[6px] w-[111px] text-black">formulario.csv</T>
            <T className="ml-[238px] w-[120px]">04/07/2018 0:15</T>
            <T className="ml-[56px] w-[154px]">Archivo de valores...</T>
            <T className="ml-[84px] w-[33px]">7 KB</T>
          </div>
        </div>
      </div>
      <div className="flex flex-1 flex-col bg-[#f0f0f0]">
        <div className="mt-[13px] flex h-[34px] items-center pl-[189px]">
          <T className="w-[68px]">Nombre:</T>
          <div className="ml-[8px] flex h-[34px] w-[795px] items-center justify-end border-2 border-[#7a7a7a] bg-white pr-[5px]"><Chev className="!size-[13px]" d="M2 7l10 11L22 7" c="#555" /></div>
          <div className="ml-[17px] flex h-[33px] w-[274px] items-center border-2 border-[#b5b5b5] bg-[#e2e2e2] pl-[4px]">
            <T className="w-[241px]">Archivos de texto (*.txt *.csv *.d</T>
            <Chev className="ml-[7px] !size-[13px]" d="M2 7l10 11L22 7" c="#555" />
          </div>
        </div>
        <div className="mt-[10px] flex h-[35px] justify-end gap-[19px] pr-[24px]">
          <div className="flex w-[127px] items-center justify-center border-[3px] border-[#0078d7] bg-[#e1e1e1]"><T className="w-[38px]">Abrir</T></div>
          <div className="flex w-[127px] items-center justify-center border-2 border-[#adadad] bg-[#e1e1e1]"><T className="w-[67px]">Cancelar</T></div>
        </div>
        <div className="mt-[4px] flex justify-end pr-[4px]">
          <I className="size-[12px]"><path d="M18 0h5v5h-5zM9 9h5v5H9zM18 9h5v5h-5zM0 18h5v5H0zM9 18h5v5H9zM18 18h5v5h-5z" fill="#bcbcbc" /></I>
        </div>
      </div>
      <div className="absolute left-[461px] top-[230px] flex h-[74px] w-[518px] flex-col justify-between border-2 border-[#767676] bg-white py-[5px] pl-[7px] text-[17px] text-[#5f5f5f] shadow-[4px_5px_1px_rgba(0,0,0,0.35)]">
        <T className="w-[497px]">Tipo: Archivo de valores separados por comas de Microsoft Excel</T>
        <T className="w-[127px]">Tamaño: 6,02 KB</T>
        <T className="w-[303px]">Fecha de modificación: 04/07/2018 0:15</T>
      </div>
    </div>
  );
}

export default function App() {
  return (
    <div className="relative h-[2480px] w-[3508px] overflow-hidden border-2 border-[#2b3566] bg-white font-['Noto_Sans',sans-serif]">
      <div className="flex h-[452px] items-start pl-[277px] pt-[232px]">
        <T className="w-[1133px] text-[50px] text-[#283663]">Agregamos un CSV (Valores separados por comas)</T>
      </div>
      <div className="relative ml-[352px] h-[1575px] w-[2800px]">
        <div className="flex h-[34px] items-center bg-white pb-[3px] pl-[5px]">
          <I className="h-[23px] w-[19px]"><Logo /></I>
          <T className="ml-[10px] w-[243px] text-[17px] text-[#8d8d8d]">QGIS 2.18.13 - 180607_Shanghai</T>
          <div className="ml-auto mr-[29px] flex items-center">
            <div className="h-[2px] w-[14px] bg-[#999]" />
            <I className="ml-[51px] size-[15px]"><path d="M1.500 7h15.500v15.500H1.500zM6 7V1.500h16.500V17H17" stroke="#888" strokeWidth="2.300" /></I>
            <X className="ml-[52px] size-[15px]" c="#888" />
          </div>
        </div>
        <div className="bg-[#efefef]">
          <MenuBar />
          <Toolbars />
          <Panels />
          <StatusBar />
        </div>
        <Taskbar />
        <LayerDialog />
        <FileDialog />
      </div>
      {/* callout from the delimited-text button up to the heading */}
      <svg className="pointer-events-none absolute left-0 top-0 h-[1200px] w-[440px]" viewBox="2 2 440 1200" fill="none" stroke="#283663" strokeWidth="4.500">
        <path d="M331 1084H279V320" />
        <path d="M262 337l17-18 17 18" />
        <rect x="345" y="1053" width="68" height="56" strokeWidth="4" />
      </svg>
    </div>
  );
}
